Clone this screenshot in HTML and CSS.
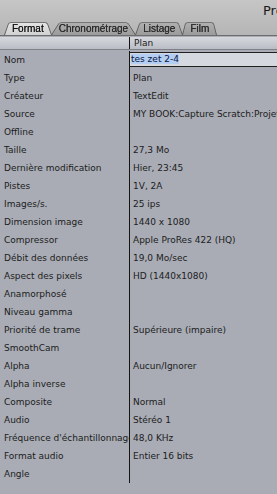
FILE: index.html
```html
<!DOCTYPE html>
<html lang="fr">
<head>
    <meta charset="UTF-8">
    <meta name="viewport" content="width=device-width, initial-scale=1.0">
    <title>Propriétés de l'élément</title>
    <link rel="stylesheet" href="styles.css">
</head>
<body>
    <!-- Barre de titre et onglets -->
    <div class="top">
        <div class="title">Propriétés de l'élément</div>
        <div class="tabs">
            <div class="tab active">Format</div>
            <div class="tab">Chronométrage</div>
            <div class="tab">Listage</div>
            <div class="tab">Film</div>
        </div>
    </div>

    <div class="head">
        <div class="label-cell"></div>
        <div class="value-cell">Plan</div>
    </div>

    <div class="rows">
        <div class="row">
            <div class="label-cell">Nom</div>
            <div class="value-cell">
                <div class="field"><span class="selected">tes zet 2-4</span></div>
            </div>
        </div>
        <div class="row"><div class="label-cell">Type</div><div class="value-cell">Plan</div></div>
        <div class="row"><div class="label-cell">Créateur</div><div class="value-cell">TextEdit</div></div>
        <div class="row"><div class="label-cell">Source</div><div class="value-cell">MY BOOK:Capture Scratch:Projet sans titre</div></div>
        <div class="row"><div class="label-cell">Offline</div><div class="value-cell"></div></div>
        <div class="row"><div class="label-cell">Taille</div><div class="value-cell">27,3 Mo</div></div>
        <div class="row"><div class="label-cell">Dernière modification</div><div class="value-cell">Hier, 23:45</div></div>
        <div class="row"><div class="label-cell">Pistes</div><div class="value-cell">1V, 2A</div></div>
        <div class="row"><div class="label-cell">Images/s.</div><div class="value-cell">25 ips</div></div>
        <div class="row"><div class="label-cell">Dimension image</div><div class="value-cell">1440 x 1080</div></div>
        <div class="row"><div class="label-cell">Compressor</div><div class="value-cell">Apple ProRes 422 (HQ)</div></div>
        <div class="row"><div class="label-cell">Débit des données</div><div class="value-cell">19,0 Mo/sec</div></div>
        <div class="row"><div class="label-cell">Aspect des pixels</div><div class="value-cell">HD (1440x1080)</div></div>
        <div class="row"><div class="label-cell">Anamorphosé</div><div class="value-cell"></div></div>
        <div class="row"><div class="label-cell">Niveau gamma</div><div class="value-cell"></div></div>
        <div class="row"><div class="label-cell">Priorité de trame</div><div class="value-cell">Supérieure (impaire)</div></div>
        <div class="row"><div class="label-cell">SmoothCam</div><div class="value-cell"></div></div>
        <div class="row"><div class="label-cell">Alpha</div><div class="value-cell">Aucun/Ignorer</div></div>
        <div class="row"><div class="label-cell">Alpha inverse</div><div class="value-cell"></div></div>
        <div class="row"><div class="label-cell">Composite</div><div class="value-cell">Normal</div></div>
        <div class="row"><div class="label-cell">Audio</div><div class="value-cell">Stéréo 1</div></div>
        <div class="row"><div class="label-cell">Fréquence d'échantillonnage</div><div class="value-cell">48,0 KHz</div></div>
        <div class="row"><div class="label-cell">Format audio</div><div class="value-cell">Entier 16 bits</div></div>
        <div class="row"><div class="label-cell">Angle</div><div class="value-cell"></div></div>
    </div>
</body>
</html>
```

FILE: styles.css
```css
/* Fenêtre de propriétés */
body {
    margin: 0;
    width: 277px;
    height: 494px;
    overflow: hidden;
    background-color: #a9acb5;
    font-family: 'DejaVu Sans', 'Liberation Sans', sans-serif;
    font-size: 9px;
    color: #1c1c1c;
}

.top {
    height: 35px;
    background: linear-gradient(#c6c6c6, #b5b5b5);
    border-bottom: 1px solid #6d6d6d;
    display: flex;
    flex-direction: column;
    justify-content: space-between;
    overflow: hidden;
}
.title {
    padding: 3px 0 0 263px;
    font-size: 13px;
    color: #1a1a1a;
    white-space: nowrap;
    height: 16px;
}
.tabs {
    display: flex;
    height: 16px;
    padding-left: 4px;
}
.tab {
    position: relative;
    padding: 4px 8px 0;
    margin-right: -1px;
    font-family: 'Liberation Sans', sans-serif;
    font-size: 10px;
    color: #2c2c2c;
    text-shadow: 0 0 0.4px #2c2c2c;
    z-index: 1;
}
.tab::before {
    content: '';
    position: absolute;
    left: 0;
    right: 0;
    top: 0;
    bottom: 0;
    z-index: -1;
    background: linear-gradient(#b0b0b0, #9c9c9c);
    border: 1px solid #5e5e5e;
    border-bottom: none;
    border-radius: 3px 3px 0 0;
    transform: perspective(14px) rotateX(12deg);
    transform-origin: bottom;
}
.tab.active {
    z-index: 2;
    color: #111;
}
.tab.active::before {
    background: linear-gradient(#e4e4e4, #d2d2d2);
}

.head {
    display: flex;
    height: 12px;
    margin-top: 1px;
    background: linear-gradient(#d6d8de, #bbbdc5);
    border-bottom: 1px solid #7f8189;
    line-height: 12px;
}
.head .value-cell {
    padding-left: 4px;
}

.rows {
    margin-top: 1px;
}
.row {
    display: flex;
    height: 18px;
    line-height: 18px;
}
.label-cell {
    width: 125px;
    flex-shrink: 0;
    padding-left: 4px;
    border-right: 1px solid #141414;
    white-space: nowrap;
    overflow: hidden;
}
.value-cell {
    flex: 1;
    padding-left: 3px;
    white-space: nowrap;
    overflow: hidden;
    color: #202020;
}
.row:first-child .value-cell {
    padding-left: 0;
}
.field {
    margin-top: 1px;
    height: 13px;
    line-height: 13px;
    background: #d5d8de;
    border-top: 1px solid #202020;
    border-bottom: 1px solid #202020;
    padding-left: 1px;
    color: #0a1640;
}
.selected {
    background: #b3cdf3;
}
```
